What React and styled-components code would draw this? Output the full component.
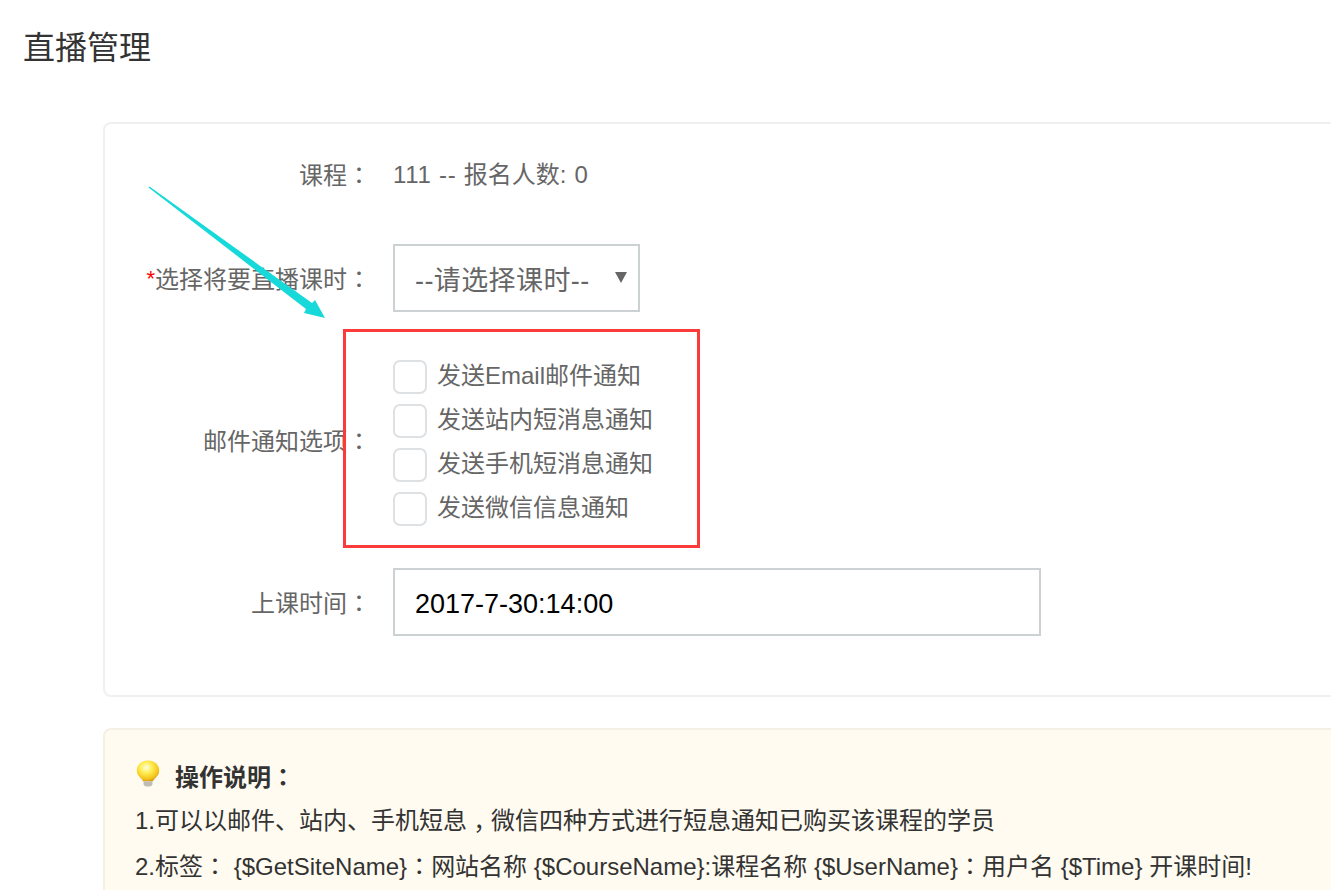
import React from 'react';
import styled, { createGlobalStyle } from 'styled-components';

const GlobalStyle = createGlobalStyle`
  html, body {
    margin: 0;
    background: #fff;
    overflow: hidden;
  }
  body {
    font-family: "Liberation Sans", "Noto Sans CJK SC", sans-serif;
  }
`;

const Page = styled.div`
  position: relative;
  width: 1331px;
  height: 890px;
  overflow: hidden;
`;

const Title = styled.h1`
  margin: 0 0 50px;
  padding: 24px 0 0 23px;
  font-size: 32px;
  font-weight: 400;
  line-height: 48px;
  color: #333;
`;

const Panel = styled.section`
  width: 1400px;
  margin-left: 103px;
  padding: 30px 0 59px;
  border: 2px solid #eef1f0;
  border-radius: 8px;
  box-sizing: content-box;
`;

const Row = styled.div`
  display: flex;
  align-items: center;
  margin-top: ${(p) => p.$top || 0}px;
  min-height: 40px;
`;

const Label = styled.label`
  flex: none;
  width: 266px;
  margin-right: 22px;
  margin-bottom: ${(p) => p.$lift || 1}px;
  text-align: right;
  font-size: 24px;
  color: #666;
  white-space: nowrap;
`;

const Star = styled.span`
  font-size: 22px;
  line-height: 1;
  vertical-align: 2px;
  color: #f00;
`;

// centred full width punctuation, as the original font draws it
const Mark = styled.span`
  font-family: "Noto Sans CJK TC", sans-serif;
`;

const Comma = styled(Mark)`
  vertical-align: -8px;
  line-height: 1;
`;

const Value = styled.div`
  margin-bottom: 3px;
  font-size: 24px;
  color: #666;
`;

const Latin = styled.span`
  letter-spacing: 0.7px;
`;

const SelectWrap = styled.div`
  position: relative;
  width: 247px;
  height: 68px;

  &::after {
    content: '';
    position: absolute;
    top: 28px;
    right: 13px;
    border-style: solid;
    border-width: 11px 6px 0;
    border-color: #666 transparent transparent;
  }
`;

const Select = styled.select`
  appearance: none;
  width: 100%;
  height: 100%;
  padding: 6px 0 0 20px;
  border: 2px solid #ccd1d4;
  border-radius: 0;
  background: #fff;
  font: inherit;
  font-size: 27px;
  letter-spacing: 0.4px;
  color: #666;
  outline: none;
`;

const Checks = styled.div`
  display: flex;
  flex-direction: column;
  gap: 10px;
`;

const Check = styled.label`
  display: flex;
  align-items: center;
  gap: 10px;
  height: 34px;
  font-size: 24px;
  color: #666;
`;

const CheckText = styled.span`
  padding-bottom: 8px;
`;

const Box = styled.input`
  appearance: none;
  flex: none;
  width: 34px;
  height: 34px;
  margin: 0;
  background: #fff;
  border: 2px solid #dde1e3;
  border-radius: 7px;
`;

const TextInput = styled.input`
  box-sizing: border-box;
  width: 648px;
  height: 68px;
  padding: 4px 20px 0;
  border: 2px solid #ccd1d4;
  border-radius: 0;
  font: inherit;
  font-size: 27px;
  color: #000;
  outline: none;
`;

const Notice = styled.section`
  width: 1400px;
  margin: 31px 0 0 103px;
  padding: 25px 30px 40px;
  border: 2px solid #f6f0e4;
  border-radius: 8px;
  background: #fffbf0;
  font-size: 24px;
  line-height: 44px;
  color: #333;
`;

const NoticeHead = styled.div`
  display: flex;
  align-items: center;
  gap: 15px;
  height: 44px;
  font-weight: 700;
`;

const NoticeLine = styled.div`
  height: 44px;
  white-space: nowrap;
`;

const BulbIcon = styled.svg`
  flex: none;
  margin: 0 0 8px 1px;
`;

const Frame = styled.div`
  position: absolute;
  left: 343px;
  top: 329px;
  width: 357px;
  height: 219px;
  box-sizing: border-box;
  border: 3px solid #fb3a3a;
  pointer-events: none;
`;

const Arrow = styled.svg`
  position: absolute;
  left: 0;
  top: 0;
  pointer-events: none;
`;

const Bulb = () => (
  <BulbIcon width="24" height="27" viewBox="0 0 24 27">
    <defs>
      <radialGradient id="bulbGlass" cx="0.42" cy="0.34" r="0.66">
        <stop offset="0" stopColor="#fffde0" />
        <stop offset="0.4" stopColor="#ffee55" />
        <stop offset="0.85" stopColor="#f4c21c" />
        <stop offset="1" stopColor="#dd9f12" />
      </radialGradient>
    </defs>
    <path
      d="M12 0.500C5.500 0.500 0.800 4.800 0.800 10.400c0 4.400 2.800 6.400 4.800 8.600.8.900 1.200 1.500 1.300 2.200h10.200c.1-.7.5-1.300 1.300-2.200 2-2.200 4.800-4.200 4.800-8.600C23.200 4.800 18.500 0.500 12 0.500z"
      fill="url(#bulbGlass)"
    />
    <path d="M7.500 21.200h9v2.800c0 1.600-2 2.600-4.500 2.600s-4.500-1-4.500-2.600z" fill="#bdbdb6" />
  </BulbIcon>
);

const lessonOptions = ['--请选择课时--'];
const noticeOptions = [
  '发送Email邮件通知',
  '发送站内短消息通知',
  '发送手机短消息通知',
  '发送微信信息通知',
];

const App = () => (
  <Page>
    <GlobalStyle />
    <Title>直播管理</Title>
    <Panel>
      <Row>
        <Label>
          课程<Mark>：</Mark>
        </Label>
        <Value>
          <Latin>111 -- </Latin>报名人数<Latin>: 0</Latin>
        </Value>
      </Row>
      <Row $top={50}>
        <Label>
          <Star>*</Star>选择将要直播课时<Mark>：</Mark>
        </Label>
        <SelectWrap>
          <Select defaultValue={lessonOptions[0]}>
            {lessonOptions.map((o) => (
              <option key={o}>{o}</option>
            ))}
          </Select>
        </SelectWrap>
      </Row>
      <Row $top={48}>
        <Label $lift={7}>
          邮件通知选项<Mark>：</Mark>
        </Label>
        <Checks>
          {noticeOptions.map((o) => (
            <Check key={o}>
              <Box type="checkbox" />
              <CheckText>{o}</CheckText>
            </Check>
          ))}
        </Checks>
      </Row>
      <Row $top={42}>
        <Label>
          上课时间<Mark>：</Mark>
        </Label>
        <TextInput type="text" defaultValue="2017-7-30:14:00" />
      </Row>
    </Panel>
    <Notice>
      <NoticeHead>
        <Bulb />
        <span>
          操作说明<Mark>：</Mark>
        </span>
      </NoticeHead>
      <NoticeLine>
        1.可以以邮件、站内、手机短息<Comma>，</Comma>微信四种方式进行短息通知已购买该课程的学员
      </NoticeLine>
      <NoticeLine>
        2.标签<Mark>：</Mark> {'{$GetSiteName}'}<Mark>：</Mark>网站名称 {'{$CourseName}'}:课程名称 {'{$UserName}'}
        <Mark>：</Mark>用户名 {'{$Time}'} 开课时间!
      </NoticeLine>
    </Notice>
    <Frame />
    <Arrow width="1331" height="890" viewBox="0 0 1331 890">
      <polygon
        points="148.500,187.500 149.500,186.500 312,303 315,300 325,318 304,313 306,309"
        fill="#17d9d9"
      />
    </Arrow>
  </Page>
);

export default App;
